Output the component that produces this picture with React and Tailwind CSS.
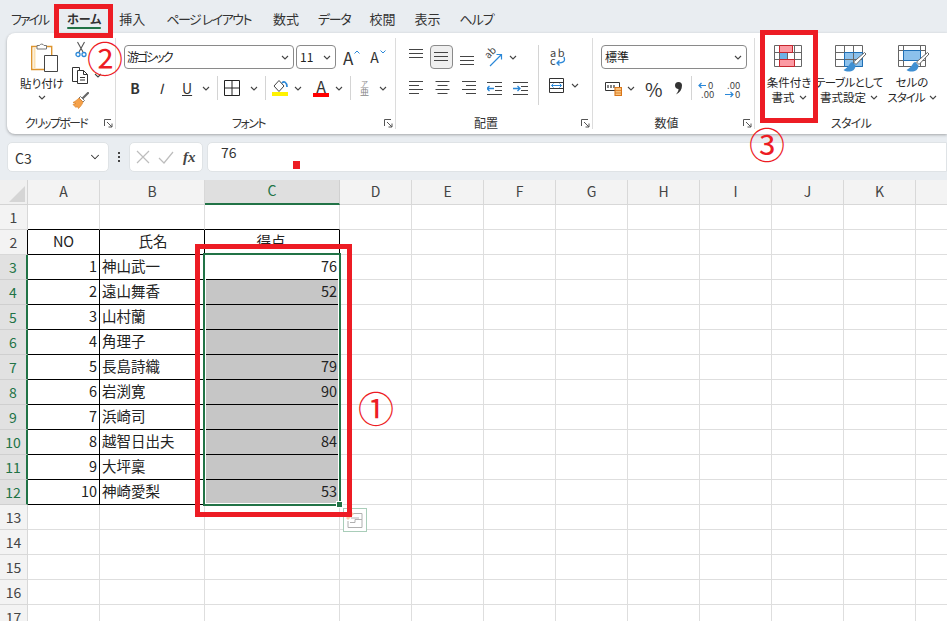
import { ChevronDown } from 'lucide-react';

const tabs = [
  ['ファイル', 'ml-[11px] tracking-[-2px]'],
  ['ホーム', 'ml-[19px] text-[12px] font-bold'],
  ['挿入', 'ml-[18px]'],
  ['ページ レイアウト', 'ml-[21px] tracking-[-1.5px]'],
  ['数式', 'ml-[22px]'],
  ['データ', 'ml-[19px] tracking-[-1.3px]'],
  ['校閲', 'ml-[19px]'],
  ['表示', 'ml-[19px]'],
  ['ヘルプ', 'ml-[19px] tracking-[-1px]'],
];

const columns = ['A', 'B', 'C', 'D', 'E', 'F', 'G', 'H', 'I', 'J', 'K', 'L'];
const rows = [
  [1, '神山武一', 76],
  [2, '遠山舞香', 52],
  [3, '山村蘭', ''],
  [4, '角理子', ''],
  [5, '長島詩織', 79],
  [6, '岩渕寛', 90],
  [7, '浜崎司', ''],
  [8, '越智日出夫', 84],
  [9, '大坪稟', ''],
  [10, '神崎愛梨', 53],
];

function Chev({ className = '' }) {
  return (
    <svg width="8" height="5" viewBox="0 0 8 5" className={`shrink-0 ${className}`}>
      <path d="M1 1l3 3 3-3" fill="none" stroke="#444" strokeWidth="1.1" />
    </svg>
  );
}

function Launcher() {
  return (
    <svg width="9" height="9" viewBox="0 0 9 9" className="shrink-0">
      <path d="M.5 7V.5H7M3 3l5 5M8 4.500V8H4.500" fill="none" stroke="#555" strokeWidth="1" />
    </svg>
  );
}

function Lines({ ys, widths, right, center }) {
  return (
    <svg width="15" height="24" viewBox="0 0 15 24">
      {ys.map((y, i) => {
        const w = widths[i];
        const x = right ? 15 - w : center ? (15 - w) / 2 : 0;
        return <path key={y} d={`M${x} ${y + 0.5}h${w}`} stroke="#444" strokeWidth="1" />;
      })}
    </svg>
  );
}

function Indent({ flip }) {
  return (
    <svg width="15" height="24" viewBox="0 0 15 24">
      <path d="M0 6.500h15M8 10.500h7M8 14.500h7M0 18.500h15" stroke="#444" strokeWidth="1" />
      <path d={flip ? 'M0 12.500h7M4.500 10l2.500 2.500L4.500 15' : 'M7 12.500H0M2.500 10L0 12.500 2.500 15'} fill="none" stroke="#2b88d8" strokeWidth="1.3" />
    </svg>
  );
}

function Group({ label, labelClass = '', width, launcher, children, border = true }) {
  return (
    <div className={`${width} relative shrink-0 flex flex-col ${border ? 'border-r border-[#dcdcdc]' : ''} my-[5px]`}>
      <div className="flex-1 pt-[7px]">{children}</div>
      <div className="h-[20px] -mb-[4px] flex items-center justify-center relative text-[12px] text-[#333]">
        <span className={labelClass}>{label}</span>
        {launcher && (
          <span className="absolute right-[2px] top-[6px] flex">
            <Launcher />
          </span>
        )}
      </div>
    </div>
  );
}

function Sep({ className = '' }) {
  return <div className={`w-px h-[24px] bg-[#d4d4d4] ${className}`} />;
}

function ClipboardGroup() {
  return (
    <div className="flex pl-[7px]">
      <div className="w-[56px] flex flex-col items-center">
        <svg width="28" height="31" viewBox="0 0 28 31" className="-mt-[3px] ml-[6px]">
          <path d="M6 4.500H.7v23h20v-23H15" fill="#fff" stroke="#dd952e" strokeWidth="1.400" />
          <path d="M2.500 6h2v20h-2z" fill="#fbe0b0" />
          <path d="M6 7V3.500h2.500a2.500 2.500 0 0 1 4.500 0H15.500V7z" fill="#fff" stroke="#777" strokeWidth="1" />
          <path d="M13.500 13.500h13v16h-13z" fill="#fff" stroke="#444" strokeWidth="1" />
        </svg>
        <span className="text-[11.5px] leading-[16px] mt-[2px] text-[#262626]">貼り付け</span>
        <Chev className="mt-[4px]" />
      </div>
      <div className="ml-[2px] flex flex-col items-start">
        <svg width="12" height="17" viewBox="0 0 12 17" className="-mt-[4px] ml-[3px]">
          <path d="M2.500 1l5.500 10M9.500 1L4 11" stroke="#555" strokeWidth="1.100" />
          <circle cx="3" cy="13.500" r="2" fill="none" stroke="#2b88d8" strokeWidth="1.300" />
          <circle cx="9" cy="13.500" r="2" fill="none" stroke="#2b88d8" strokeWidth="1.300" />
        </svg>
        <div className="flex items-center mt-[9px]">
          <svg width="17" height="17" viewBox="0 0 17 17">
            <path d="M5 14.500H.5V.5h7V3" fill="none" stroke="#333" strokeWidth="1" />
            <path d="M5.500 3.500h6l4 4v9h-10z M11.500 3.500v4h4M8 10.500h5M8 13h5" fill="#fff" stroke="#333" strokeWidth="1" />
          </svg>
          <Chev className="ml-[5px]" />
        </div>
        <svg width="17" height="17" viewBox="0 0 17 17" className="mt-[8px]">
          <path d="M16 1l-5 5" stroke="#666" strokeWidth="2.200" strokeLinecap="round" />
          <path d="M8.500 4.500l4 4-1.500 1.500-4-4z" fill="#fff" stroke="#666" strokeWidth="0.900" />
          <path d="M7 6l4 4c-1 3-3 5-4.500 6.500L5 14l-1 1.500-3-3 3-1-3-1C3 9.500 5 8 7 6z" fill="#f5a14a" stroke="#d9822b" strokeWidth="0.700" />
        </svg>
      </div>
    </div>
  );
}

function FontGroup() {
  return (
    <div>
      <div className="flex items-center pl-[8px] h-[24px]">
        <div className="w-[170px] h-[24px] rounded-[4px] border border-[#8a8a8a] flex items-center justify-between pl-[2px] pr-[4px] text-[12px] text-[#222]">
          <span className="tracking-[-2px]">游ゴシック</span>
          <Chev />
        </div>
        <div className="w-[40px] h-[24px] ml-[2px] rounded-[4px] border border-[#8a8a8a] flex items-center justify-between pl-[3px] pr-[4px] text-[12px] text-[#222]">
          11
          <Chev />
        </div>
        <span className="ml-[7px] relative text-[17px] leading-none text-[#333]">
          A
          <svg width="6" height="4" viewBox="0 0 6 4" className="absolute -right-[7px] top-[1px]">
            <path d="M.5 3.500L3 1l2.500 2.500" fill="none" stroke="#2b88d8" strokeWidth="1" />
          </svg>
        </span>
        <span className="ml-[17px] relative text-[14px] leading-none text-[#333]">
          A
          <svg width="6" height="4" viewBox="0 0 6 4" className="absolute -right-[7px] top-[0px]">
            <path d="M.5.500L3 3 5.500.500" fill="none" stroke="#2b88d8" strokeWidth="1" />
          </svg>
        </span>
      </div>
      <div className="flex items-center pl-[14px] h-[24px] mt-[7px]">
        <span className="w-[10px] text-center font-bold text-[14px] text-[#333]">B</span>
        <span className="w-[10px] ml-[16px] text-center italic text-[14px] text-[#333]">I</span>
        <span className="w-[10px] ml-[16px] text-center underline text-[14px] text-[#333]">U</span>
        <Chev className="ml-[10px]" />
        <Sep className="ml-[7px]" />
        <svg width="16" height="16" viewBox="0 0 16 16" className="ml-[6px]">
          <path d="M.5.500h15v15H.5zM8 .5v15M.5 8h15" fill="none" stroke="#222" strokeWidth="1" />
        </svg>
        <Chev className="ml-[10px]" />
        <Sep className="ml-[7px]" />
        <div className="ml-[6px] flex flex-col items-center w-[16px]">
          <svg width="16" height="12" viewBox="0 0 16 12">
            <path d="M7 .5l5 5.500-5 5.500-5-5.500z" fill="#fff" stroke="#444" strokeWidth="1" />
            <path d="M10 3c2-2 5-1 5 4" fill="none" stroke="#2b88d8" strokeWidth="1.700" />
          </svg>
          <div className="w-[16px] h-[4px] bg-[#fff200]" />
        </div>
        <Chev className="ml-[6px]" />
        <div className="ml-[11px] flex flex-col items-center w-[16px]">
          <span className="text-[16px] leading-[12px] text-[#333]">A</span>
          <div className="w-[16px] h-[4px] bg-[#ff0000] mt-[1px]" />
        </div>
        <Chev className="ml-[6px]" />
        <Sep className="ml-[7px]" />
        <div className="ml-[9px] w-[9px] flex flex-col items-center text-[#888] leading-none">
          <span className="text-[7px]">ア</span>
          <span className="text-[9px]">亜</span>
        </div>
        <Chev className="ml-[10px]" />
      </div>
    </div>
  );
}

function AlignGroup() {
  return (
    <div className="flex pl-[13px]">
      <div className="w-[129px]">
        <div className="flex items-center h-[24px]">
          <Lines ys={[4, 8, 12]} widths={[14, 14, 14]} />
          <div className="ml-[6px] w-[23px] h-[24px] rounded-[4px] border border-[#8a8a8a] bg-[#efefef] flex items-center justify-center">
            <Lines ys={[7, 11, 15]} widths={[14, 14, 14]} />
          </div>
          <div className="ml-[7px]">
            <Lines ys={[11, 15, 19]} widths={[14, 14, 14]} />
          </div>
          <svg width="18" height="20" viewBox="0 0 18 20" className="ml-[10px] overflow-visible">
            <text x="1" y="10" fontSize="10" fill="#444" transform="rotate(-45 5 8)">ab</text>
            <path d="M5 19L16 8M11.500 7.500H16.500V12.500" fill="none" stroke="#2b88d8" strokeWidth="1.200" />
          </svg>
          <Chev className="ml-[6px]" />
        </div>
        <div className="flex items-center h-[24px] mt-[7px] gap-[11px]">
          <Lines ys={[5, 9, 13, 17]} widths={[14, 10, 14, 10]} />
          <Lines ys={[5, 9, 13, 17]} widths={[14, 10, 14, 10]} center />
          <Lines ys={[5, 9, 13, 17]} widths={[14, 10, 14, 10]} right />
          <Indent />
          <Indent flip />
        </div>
      </div>
      <div className="border-l border-[#d4d4d4] h-[60px] pl-[10px]">
        <svg width="18" height="19" viewBox="0 0 18 19" className="mt-[3px] ml-[1px] overflow-visible">
          <text x="0" y="9" fontSize="11" letterSpacing="1.500" fill="#444">ab</text>
          <text x="0" y="17" fontSize="11" fill="#444">c</text>
          <path d="M14 9c1.500 4 0 6-7 6M9.500 12.500L7 15l2.500 2.500" fill="none" stroke="#2b88d8" strokeWidth="1.300" />
        </svg>
        <div className="flex items-center mt-[11px]">
          <svg width="15" height="15" viewBox="0 0 15 15">
            <path d="M.5 4.500h14v6H.5z" fill="#fff" stroke="#2b88d8" strokeWidth="1" />
            <path d="M.5.500h14v14H.5zM.5 4.500h14M.5 10.500h14" fill="none" stroke="#333" strokeWidth="1" />
            <path d="M2.500 7.500h10M4.500 5.500l-2 2 2 2M10.500 5.500l2 2-2 2" fill="none" stroke="#2b88d8" strokeWidth="1" />
          </svg>
          <Chev className="ml-[7px]" />
        </div>
      </div>
    </div>
  );
}

function NumberGroup() {
  return (
    <div className="pl-[8px]">
      <div className="w-[146px] h-[24px] rounded-[4px] border border-[#8a8a8a] flex items-center justify-between pl-[3px] pr-[4px] text-[12px] text-[#222]">
        標準
        <Chev />
      </div>
      <div className="flex items-center h-[24px] mt-[7px] pl-[4px]">
        <svg width="17" height="15" viewBox="0 0 17 15">
          <path d="M.5 1.500h14v8H.5z" fill="#fff" stroke="#333" strokeWidth="1" />
          <path d="M3 4v3M6 4v3M9 4v3" stroke="#333" strokeWidth="1.200" />
          <path d="M10 6.500h6.500V14.500H10z" fill="#f9c37e" stroke="#d9761a" strokeWidth="1.100" />
          <path d="M10 9.500h6.500M10 12h6.500" stroke="#d9761a" strokeWidth="0.800" />
        </svg>
        <Chev className="ml-[5px]" />
        <span className="ml-[10px] w-[17px] text-center text-[19px] leading-none text-[#333]">%</span>
        <svg width="8" height="13" viewBox="0 0 8 13" className="ml-[12px]">
          <path d="M1 3.500a3.500 3.500 0 1 1 7 0c0 4-2 7-6 9 1.500-2 2.500-3.500 2.500-5.500-2 0-3.500-1.500-3.500-3.500z" fill="#333" />
        </svg>
        <Sep className="ml-[9px]" />
        <svg width="18" height="18" viewBox="0 0 18 18" className="ml-[6px] overflow-visible">
          <text x="10" y="10" fontSize="9.500" fill="#444">0</text>
          <text x="3" y="19" fontSize="9.500" fill="#444">.00</text>
          <path d="M8 6.500H1M3.500 4L1 6.500 3.500 9" fill="none" stroke="#2b88d8" strokeWidth="1.200" />
        </svg>
        <svg width="18" height="18" viewBox="0 0 18 18" className="ml-[8px] overflow-visible">
          <text x="3" y="10" fontSize="9.500" fill="#444">.00</text>
          <text x="11" y="19" fontSize="9.500" fill="#444">0</text>
          <path d="M1 15.500h8M6.500 13L9 15.500 6.500 18" fill="none" stroke="#2b88d8" strokeWidth="1.200" />
        </svg>
      </div>
    </div>
  );
}

function Brush() {
  return (
    <>
      <path d="M29.500 7.500l1.500 1.500-10 10.500-2.500-2.500z" fill="#fff" stroke="#666" strokeWidth="1" />
      <path d="M17.500 17c-3 0-3 5-9 8 4 3 12 2 12-4.500z" fill="#3f8fd2" />
    </>
  );
}

function TableIcon() {
  return (
    <svg width="32" height="28" viewBox="0 0 32 28" className="ml-[4px]">
      <path d="M9.500 7.500h18v14h-18z" fill="#8cc1ec" />
      <path d="M.5.500h27v21H.5zM.5 7.500h27M.5 14.500h27M9.500.5v21M18.500.5v21" fill="none" stroke="#666" strokeWidth="1" />
      <path d="M9.500 7.500h18v14h-18z" fill="none" stroke="#1f6fb5" strokeWidth="1" />
      <Brush />
    </svg>
  );
}

function CellIcon() {
  return (
    <svg width="32" height="28" viewBox="0 0 32 28" className="ml-[4px]">
      <path d="M.5.500h27v21H.5zM.5 5.500h27M.5 15.500h27M5.500.5v21M22.500.5v21" fill="none" stroke="#666" strokeWidth="1" />
      <path d="M5.500 5.500h17v10h-17z" fill="#8cc1ec" stroke="#1f6fb5" strokeWidth="1" />
      <Brush />
    </svg>
  );
}

function CondIcon() {
  return (
    <svg width="28" height="22" viewBox="0 0 28 22" className="-ml-[2px]">
      <path d="M5.500 7.500h8v7h-8z" fill="#6fb1e6" />
      <path d="M.5.500h27v21H.5zM.5 7.500h27M.5 14.500h27M5.500.5v21M13.500.5v21M20.500.5v21" fill="none" stroke="#666" strokeWidth="1" />
      <path d="M5.500.5h13v7h-13zM5.500 14.500h15v7h-15z" fill="#fc9aa3" stroke="#c4262e" strokeWidth="1" />
    </svg>
  );
}

function StyleButton({ icon, one, two, width, oneClass = '', twoClass = '' }) {
  return (
    <div className={`${width} flex flex-col items-center text-[11.5px] leading-[15px] text-[#262626] whitespace-nowrap`}>
      <div className="h-[27px] flex items-start justify-center">{icon}</div>
      <span className={`mt-[3px] ${oneClass}`}>{one}</span>
      <span className="flex items-center gap-[4px]">
        <span className={twoClass}>{two}</span>
        <Chev />
      </span>
    </div>
  );
}

function StyleGroup() {
  return (
    <div className="flex pl-[5px]">
      <StyleButton icon={<CondIcon />} one="条件付き" two="書式" width="w-[58px]" />
      <StyleButton icon={<TableIcon />} one="テーブルとして" two="書式設定" oneClass="tracking-[-0.6px]" width="w-[62px]" />
      <StyleButton icon={<CellIcon />} one="セルの" two="スタイル" twoClass="tracking-[-1px]" width="w-[64px]" />
    </div>
  );
}

function HeaderRow() {
  return (
    <>
      <div className="bg-[#f0f0f0] border-r border-b border-[#d4d4d4] flex items-end justify-end pr-[2px] pb-[2px]">
        <div className="w-0 h-0 border-l-[16px] border-l-transparent border-b-[16px] border-b-[#d5d5d5]" />
      </div>
      {columns.map((c) =>
        c === 'C' ? (
          <div key={c} className="bg-[#dfdfdf] border-r border-[#d0d0d0] border-b-2 border-b-[#217346] flex items-center justify-center pb-[2px] text-[14px] text-[#217346]">
            {c}
          </div>
        ) : (
          <div key={c} className="bg-[#f3f3f3] border-r border-b border-[#d8d8d8] flex items-center justify-center pb-[2px] text-[14px] text-[#444]">
            {c}
          </div>
        ),
      )}
    </>
  );
}

function Row({ n }) {
  const data = n >= 3 && n <= 12 ? rows[n - 3] : null;
  const selected = data !== null;
  const cellText = 'text-[14.5px] text-[#222] flex items-center pb-[2px]';
  let a = 'border-r border-b border-[#dedede]';
  let b = a;
  let c = a;
  if (n === 1) {
    a = b = c = 'border-r border-[#dedede] border-b border-b-black';
  }
  if (n >= 2 && n <= 12) {
    a = b = c = 'border-r border-b border-black';
  }
  const fill = selected && data[0] > 1 ? 'bg-[#c6c6c6]' : '';
  return (
    <>
      {selected ? (
        <div className="bg-[#e1e1e1] border-r-2 border-r-[#217346] border-b border-[#cfcfcf] flex items-center justify-center text-[14px] text-[#217346]">
          {n}
        </div>
      ) : (
        <div className={`bg-[#f3f3f3] border-b border-[#d8d8d8] border-r ${n === 2 ? 'border-r-black' : 'border-r-[#d8d8d8]'} flex items-center justify-center text-[14px] text-[#444]`}>
          {n}
        </div>
      )}
      <div className={`${a} ${cellText} justify-end pr-[2px]`}>{data ? data[0] : n === 2 ? <span className="w-full text-center pl-[2px]">NO</span> : ''}</div>
      <div className={`${b} ${cellText} pl-[2px]`}>{data ? data[1] : n === 2 ? <span className="w-full text-center">氏名</span> : ''}</div>
      <div className={`${c} ${fill} ${cellText} justify-end pr-[2px]`}>{data ? data[2] : n === 2 ? <span className="w-full text-center">得点</span> : ''}</div>
      {columns.slice(3).map((col) => (
        <div key={col} className="border-r border-b border-[#dedede]" />
      ))}
    </>
  );
}

export default function App() {
  return (
    <div className="relative w-[947px] h-[621px] overflow-hidden bg-[#e9edf1] [font-family:'Noto_Sans_CJK_JP','Noto_Sans',sans-serif] [font-feature-settings:'palt']">
      {/* タブ */}
      <div className="h-[33px] pt-[4px] flex items-center text-[13px] text-[#333] whitespace-nowrap">
        {tabs.map(([t, cls]) => (
          <span key={t} className={`${cls} relative`}>
            {t}
            {t === 'ホーム' && <span className="absolute left-0 right-0 -bottom-[1px] h-[2px] bg-[#217346] rounded" />}
          </span>
        ))}
      </div>

      {/* リボン */}
      <div className="ml-[7px] h-[101px] bg-white rounded-l-[8px] shadow-[0_1px_3px_rgba(0,0,0,0.3)] flex">
        <Group label="クリップボード" labelClass="tracking-[-1.7px] pr-[10px]" width="w-[109px]" launcher>
          <ClipboardGroup />
        </Group>
        <Group label="フォント" labelClass="tracking-[-1.5px] pr-[14px]" width="w-[280px]" launcher>
          <FontGroup />
        </Group>
        <Group label="配置" labelClass="pr-[16px]" width="w-[197px]" launcher>
          <AlignGroup />
        </Group>
        <Group label="数値" labelClass="pr-[14px]" width="w-[162px]" launcher>
          <NumberGroup />
        </Group>
        <Group label="スタイル" labelClass="tracking-[-0.7px]" width="w-[192px]" border={false}>
          <StyleGroup />
        </Group>
      </div>

      {/* 数式バー */}
      <div className="mt-[8px] h-[30px] flex items-stretch pl-[7px]">
        <div className="w-[102px] bg-white rounded-[5px] border border-[#dfe3e6] flex items-center justify-between pl-[7px] pr-[6px] pt-[3px] text-[14px] text-[#333]">
          C3
          <ChevronDown size={14} color="#333" strokeWidth={1.8} className="-mt-[3px]" />
        </div>
        <div className="w-[20px] flex flex-col items-center justify-center gap-[2px]">
          <span className="w-[2px] h-[2px] bg-[#444]" />
          <span className="w-[2px] h-[2px] bg-[#444]" />
          <span className="w-[2px] h-[2px] bg-[#444]" />
        </div>
        <div className="w-[74px] bg-white rounded-[5px] border border-[#dfe3e6] flex items-center pl-[6px]">
          <svg width="14" height="14" viewBox="0 0 14 14">
            <path d="M1 1l12 12M13 1L1 13" stroke="#bdbdbd" strokeWidth="1.200" />
          </svg>
          <svg width="16" height="13" viewBox="0 0 16 13" className="ml-[8px]">
            <path d="M1 7l5 5L15 1" fill="none" stroke="#bdbdbd" strokeWidth="1.200" />
          </svg>
          <span className="ml-[9px] italic font-bold text-[15px] text-[#444] [font-family:'Liberation_Serif',serif]">fx</span>
        </div>
        <div className="ml-[4px] flex-1 bg-white rounded-l-[5px] border border-[#dfe3e6] flex items-center pl-[13px] pb-[9px] text-[14px] text-[#333]">76</div>
      </div>

      {/* シート */}
      <div className="mt-[8px] bg-white grid grid-cols-[28px_72px_105px_135px_repeat(9,72px)] grid-rows-[25px] auto-rows-[25px] w-[1060px] h-[450px]">
        <HeaderRow />
        {Array.from({ length: 17 }, (_, i) => (
          <Row key={i} n={i + 1} />
        ))}
      </div>

      {/* 選択範囲 */}
      <div className="absolute left-[203px] top-[253px] w-[138px] h-[253px] border-2 border-[#217346] shadow-[inset_0_0_0_1px_white]" />
      <div className="absolute left-[336px] top-[501px] w-[7px] h-[7px] bg-[#217346] border border-white" />
      <div className="absolute left-[343px] top-[508px] w-[24px] h-[24px] border border-[#a9cdb9] bg-white flex items-center justify-center">
        <svg width="18" height="17" viewBox="0 0 18 17">
          <path d="M3 1.500h13v6H9M5 6h8M9 7.500v3h-5M2 9v6.500h14v-8" fill="none" stroke="#b0b0b0" strokeWidth="1" />
          <path d="M6 0l2 2-6 6-2-2z" fill="#f9cfa8" />
        </svg>
      </div>

      {/* 赤枠と番号 */}
      <div className="absolute left-[54px] top-[4px] w-[59px] h-[34px] border-[5px] border-[#ed1c24]" />
      <div className="absolute left-[760px] top-[30px] w-[58px] h-[93px] border-[5px] border-[#ed1c24]" />
      <div className="absolute left-[195px] top-[244px] w-[157px] h-[273px] border-[5px] border-[#ed1c24]" />
      <div className="absolute left-[293px] top-[161px] w-[7px] h-[8px] bg-[#ed1c24]" />
      <span className="absolute left-[87px] top-[35px] text-[36px] leading-[44px] text-[#ed1c24] [font-feature-settings:'normal']">②</span>
      <span className="absolute left-[358px] top-[385px] text-[36px] leading-[44px] text-[#ed1c24] [font-feature-settings:'normal']">①</span>
      <span className="absolute left-[749px] top-[121px] text-[36px] leading-[44px] text-[#ed1c24] [font-feature-settings:'normal']">③</span>
    </div>
  );
}
